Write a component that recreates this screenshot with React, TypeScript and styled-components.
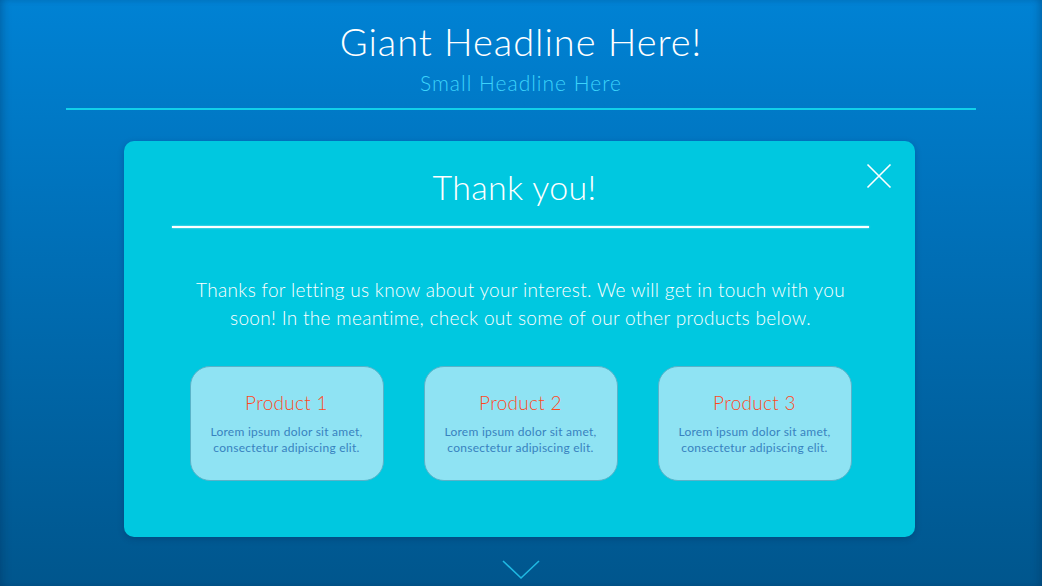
import React from "react";
import styled, { createGlobalStyle } from "styled-components";

const Global = createGlobalStyle`
  html, body { margin: 0; padding: 0; }
  body { font-family: Lato, "Open Sans", sans-serif; overflow: hidden; }
  * { box-sizing: border-box; }
`;

const Page = styled.div`
  width: 1042px;
  height: 586px;
  background: linear-gradient(180deg, #0082d4 0%, #0070b8 40%, #00568d 100%);
  box-shadow: inset 6px 0 8px -4px rgba(0, 40, 80, 0.35), inset -6px 0 8px -4px rgba(0, 40, 80, 0.35);
  display: flex;
  flex-direction: column;
  align-items: center;
  padding-top: 18px;
`;

const Header = styled.header`
  display: flex;
  flex-direction: column;
  align-items: center;
  width: 910px;
`;

const Title = styled.h1`
  margin: 0;
  font-size: 38px;
  line-height: 46px;
  font-weight: 300;
  letter-spacing: 0.95px;
  color: #ffffff;
`;

const Subtitle = styled.h2`
  margin: 7px 0 0;
  font-size: 21px;
  line-height: 24px;
  font-weight: 300;
  letter-spacing: 1px;
  color: #3cd3fb;
`;

const Divider = styled.div<{ $color: string; $glow?: boolean }>`
  width: 100%;
  height: 2px;
  background: ${(p) => p.$color};
  box-shadow: ${(p) => (p.$glow ? "0 0 2px rgba(255,255,255,0.7)" : "none")};
`;

const HeaderDivider = styled(Divider)`
  margin-top: 13px;
`;

const Modal = styled.section`
  position: relative;
  margin-top: 31px;
  margin-left: -3px;
  width: 791px;
  background: #00c8e0;
  border-radius: 10px;
  box-shadow: 0 2px 6px rgba(0, 30, 70, 0.25);
  padding: 26px 46px 56px 48px;
  display: flex;
  flex-direction: column;
  align-items: center;
`;

const CloseButton = styled.button`
  position: absolute;
  top: 22px;
  right: 23px;
  width: 26px;
  height: 26px;
  padding: 0;
  border: none;
  background: transparent;
  cursor: pointer;
`;

const ModalTitle = styled.h3`
  margin: 0 12px 0 0;
  font-size: 34px;
  line-height: 40px;
  font-weight: 300;
  letter-spacing: 0.3px;
  color: #ffffff;
`;

const ModalDivider = styled(Divider)`
  margin-top: 19px;
`;

const Message = styled.p`
  margin: 48px 0 0;
  width: 670px;
  text-align: center;
  font-size: 19px;
  line-height: 28px;
  font-weight: 300;
  letter-spacing: 0.32px;
  color: #ffffff;
`;

const Cards = styled.div`
  margin-top: 34px;
  display: grid;
  grid-template-columns: repeat(3, 194px);
  gap: 40px;
`;

const Card = styled.div`
  height: 115px;
  border-radius: 20px;
  background: #8fe3f3;
  border: 1px solid #58b3c9;
  display: flex;
  flex-direction: column;
  align-items: center;
  padding-top: 24px;
`;

const CardTitle = styled.div`
  font-size: 19px;
  line-height: 24px;
  font-weight: 300;
  letter-spacing: 0.3px;
  color: #ff4a1e;
`;

const CardText = styled.div`
  margin-top: 9px;
  font-size: 12px;
  line-height: 16px;
  letter-spacing: 0.25px;
  text-align: center;
  color: #3882bf;
`;

const Chevron = styled.svg`
  margin-top: 23px;
`;

const products = ["Product 1", "Product 2", "Product 3"];

export default function App() {
  return (
    <>
      <Global />
      <Page>
        <Header>
          <Title>Giant Headline Here!</Title>
          <Subtitle>Small Headline Here</Subtitle>
          <HeaderDivider $color="#12d0ea" />
        </Header>
        <Modal>
          <CloseButton aria-label="Close">
            <svg width="26" height="26" viewBox="0 0 26 26">
              <path d="M1.5 1.5 L24.5 24.5 M24.5 1.5 L1.5 24.5" stroke="#ffffff" strokeWidth="1.6" fill="none" />
            </svg>
          </CloseButton>
          <ModalTitle>Thank you!</ModalTitle>
          <ModalDivider $color="#ffffff" $glow />
          <Message>
            Thanks for letting us know about your interest. We will get in touch with you soon! In the
            meantime, check out some of our other products below.
          </Message>
          <Cards>
            {products.map((p) => (
              <Card key={p}>
                <CardTitle>{p}</CardTitle>
                <CardText>
                  Lorem ipsum dolor sit amet,
                  <br />
                  consectetur adipiscing elit.
                </CardText>
              </Card>
            ))}
          </Cards>
        </Modal>
        <Chevron width="40" height="20" viewBox="0 0 40 20">
          <path d="M2 1 L20 18 L38 1" stroke="#1fb8e2" strokeWidth="1.6" fill="none" />
        </Chevron>
      </Page>
    </>
  );
}
